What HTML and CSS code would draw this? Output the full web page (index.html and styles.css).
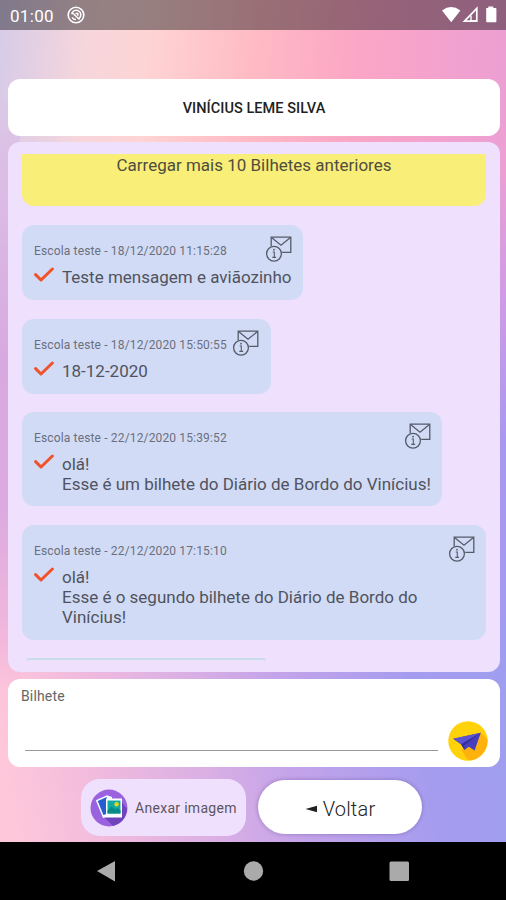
FILE: index.html
```html
<!DOCTYPE html>
<html lang="pt-BR">
<head>
<meta charset="utf-8">
<title>Bilhetes</title>
<link rel="stylesheet" href="styles.css">
</head>
<body>
<svg width="0" height="0" class="defs" aria-hidden="true">
  <symbol id="check" viewBox="0 0 20 16"><path d="M1.6 7.6 7 13 18.4 2" fill="none" stroke="#f0522b" stroke-width="3" stroke-linecap="round" stroke-linejoin="round"/></symbol>
  <symbol id="mail" viewBox="0 0 28 28"><g fill="none" stroke="#555b69" stroke-width="1.3"><path d="M6.2 11V2.2H25.8V17.3H17.2"/><path d="M6.5 2.5 16 10.2 25.5 2.5"/><circle cx="9" cy="18.7" r="7.4"/><path d="M7.7 17h1.6v5.3M7.3 22.4h3.8" stroke-width="1.1"/></g><circle cx="9" cy="14.7" r=".9" fill="#555b69"/></symbol>
</svg>
<div class="phone">
  <header class="status">
    <span class="clock">01:00</span>
    <svg class="dnd" width="18" height="18" viewBox="0 0 18 18" fill="none" stroke="#fff"><circle cx="9" cy="9" r="7.8" stroke-width="1.6"/><path d="M4.7 8.2A4.6 4.6 0 1 1 12 12.5M5.1 11.3A4.6 4.6 0 0 0 9 13.6M5.5 7 12.5 13.5M8.5 7.5h2.3v2.3" stroke-width="1.5"/></svg>
    <svg class="signals" width="56" height="18" viewBox="0 0 56 18"><path d="M0 4.5Q9.2-2.3 18.4 4.5L9.2 16.2Z" fill="#fff"/><path d="M22.5 15.2 34.8 2.4V15.2Z" fill="none" stroke="#fff" stroke-width="1.7"/><path d="M29 9.6V15M29.7 14.6H34" stroke="#fff" stroke-width="1.4"/><path d="M44.2 2.1H46.3V.6H51.3V2.1H53.6Q54.4 2.1 54.4 3V15.2Q54.4 16.2 53.6 16.2H45Q44.2 16.2 44.2 15.2Z" fill="#fff"/></svg>
  </header>
  <main class="screen">
    <h1 class="title">VINÍCIUS LEME SILVA</h1>
    <section class="panel">
      <div class="feed">
        <button class="more">Carregar mais 10 Bilhetes anteriores</button>
        <article class="note n1">
          <div class="meta"><span>Escola teste - 18/12/2020 11:15:28</span><svg class="mail"><use href="#mail"/></svg></div>
          <div class="message"><svg class="check"><use href="#check"/></svg><p>Teste mensagem e aviãozinho</p></div>
        </article>
        <article class="note n2">
          <div class="meta"><span>Escola teste - 18/12/2020 15:50:55</span><svg class="mail"><use href="#mail"/></svg></div>
          <div class="message"><svg class="check"><use href="#check"/></svg><p>18-12-2020</p></div>
        </article>
        <article class="note n3">
          <div class="meta"><span>Escola teste - 22/12/2020 15:39:52</span><svg class="mail"><use href="#mail"/></svg></div>
          <div class="message"><svg class="check"><use href="#check"/></svg><p>olá!<br>Esse é um bilhete do Diário de Bordo do Vinícius!</p></div>
        </article>
        <article class="note n4">
          <div class="meta"><span>Escola teste - 22/12/2020 17:15:10</span><svg class="mail"><use href="#mail"/></svg></div>
          <div class="message"><svg class="check"><use href="#check"/></svg><p>olá!<br>Esse é o segundo bilhete do Diário de Bordo do<br>Vinícius!</p></div>
        </article>
        <div class="next-note"></div>
      </div>
    </section>
    <section class="composer">
      <div class="field"><span class="label">Bilhete</span><div class="line"></div></div>
      <svg class="send" width="40" height="40" viewBox="0 0 40 40"><circle cx="20" cy="20" r="19.7" fill="#ffd20a"/><path d="M32.5 11.5 39.6 18.6Q39.7 31 29 37.3 23 40.3 19.3 38.5L13.5 29Z" fill="#ffb20d"/><path d="M5.2 17.8 32.8 11.8 26.6 29.5 20.7 25.7 16.6 28.9 13 23.3Z" fill="#493fbc"/><path d="M5.2 17.8 32.8 11.8 13 23.3Z" fill="#5c54cf"/><path d="M13 23.3 32.8 11.8 16.2 24.6 16.6 28.9Z" fill="#372da0"/></svg>
    </section>
    <div class="actions">
      <button class="attach"><svg width="38" height="38" viewBox="0 0 38 38"><circle cx="19" cy="19" r="18.5" fill="#9b62df"/><path d="M31 12 37 20Q36 33 23 37L14 28Z" fill="#7043bd"/><path d="M5.8 11.2 17 6.2 22 8 22 27 13 29Z" fill="#f5fbff"/><path d="M7.8 12.1 16.8 8 17 24.8 13.4 26Z" fill="#245fd0"/><path d="M16 9.5h16v19H16z" fill="#fff"/><path d="M17.5 11.5h13v13h-13z" fill="#12aaa5"/><circle cx="26.6" cy="15.3" r="2.2" fill="#e8d51b"/><path d="m17.5 21.5 4-4 4 3 2-1.5 3 2.5v3h-13z" fill="#078b88"/></svg><span>Anexar imagem</span></button>
      <button class="back"><svg width="13" height="8" viewBox="0 0 13 8"><path d="M.5 4 12 .7V7.3Z" fill="#222"/></svg><span>Voltar</span></button>
    </div>
  </main>
  <nav class="nav">
    <svg width="506" height="58" viewBox="0 0 506 58" fill="#aaa"><path d="M97 29 115 19V39.5Z"/><circle cx="253.5" cy="29" r="9.7"/><rect x="389.5" y="19.5" width="19.5" height="19.5" rx="1.5"/></svg>
  </nav>
</div>
</body>
</html>
```

FILE: styles.css
```css
* { box-sizing: border-box; }
body { margin: 0; font-family: Roboto, "Liberation Sans", sans-serif; }
p, h1 { margin: 0; font-weight: 400; }
button { border: 0; padding: 0; margin: 0; font-family: inherit; color: inherit; }
svg { display: block; flex: none; }
.defs { position: absolute; }
.phone {
  width: 506px; height: 900px; display: flex; flex-direction: column; overflow: hidden;
  background:
    linear-gradient(#d9c4e700, #dcc0e6 10%, #d8a9e0 45%, #dcaae0 70%, #f3b8dc 92%, #f8c0dc00) 0 90px / 20px 600px no-repeat,
    linear-gradient(#ee9fd400, #eca0d3 12%, #ca9be7 38%, #aa98ef 58%, #a19cf0 92%, #a19cf000) 486px 90px / 20px 600px no-repeat,
    linear-gradient(94deg, #d6cbe8 0%, #f6d6dc 17%, #fed4d4 29%, #ffbac4 50%, #fba6c6 70%, #ec9fd4 100%) 0 0 / 506px 160px no-repeat,
    linear-gradient(80deg, #ffc8da 2%, #f0bade 18%, #dbb0e4 34%, #c5a4e9 48%, #a69cef 70%, #98a1f0 100%) 0 160px / 506px 682px no-repeat;
}
.status { height: 30px; display: flex; align-items: center; padding: 0 8px 0 10px; background: rgba(0,0,0,.4); color: #fff; }
.clock { font-size: 17px; letter-spacing: .3px; padding-top: 2px; }
.dnd { margin-left: 13px; }
.signals { margin-left: auto; }
.screen { height: 812px; padding: 49px 6px 0 8px; }
.title { height: 57px; border-radius: 12px; background: #fff; display: flex; align-items: center; justify-content: center; font-size: 14.5px; font-weight: 500; letter-spacing: .05px; color: #222; padding-top: 2px; }
.panel { height: 530px; margin-top: 6px; padding: 12px 14px 11px; border-radius: 12px; background: #efe0fe; }
.feed { height: 507px; overflow: hidden; display: flex; flex-direction: column; align-items: flex-start; }
.more { flex: none; width: 100%; height: 52px; background: #f8ee78; border-radius: 0 0 12px 12px; padding-bottom: 30px; font-size: 17px; color: #504d3e; }
.note { flex: none; height: 75px; margin-top: 19px; padding: 12px; border-radius: 12px; background: #d1dbf5; color: #50535e; }
.n1 { width: 281px; }
.n2 { width: 249px; margin-top: 18.5px; }
.n3 { width: 420px; height: 94px; margin-top: 18.5px; }
.n4 { width: 464px; height: 115px; margin-top: 19px; }
.meta { height: 28px; display: flex; justify-content: space-between; font-size: 12px; line-height: 29px; letter-spacing: .15px; color: #6b6f7d; white-space: nowrap; }
.mail { width: 28px; height: 28px; margin-top: -2px; margin-right: -2px; }
.n2 .mail { margin-right: -1px; }
.message { display: flex; gap: 8px; font-size: 17px; line-height: 20px; white-space: nowrap; padding-top: 2px; }
.check { width: 20px; height: 16px; }
.next-note { flex: none; width: 240px; height: 3px; margin: 18px 0 0 4px; border-top: 2px solid #cadbeb; border-radius: 8px 8px 0 0; }
.composer { height: 88px; margin-top: 7px; padding: 8px 12px 6px 13px; border-radius: 12px; background: #fff; display: flex; justify-content: space-between; align-items: flex-end; }
.field { width: 417px; align-self: stretch; }
.label { display: block; font-size: 14px; line-height: 18px; letter-spacing: .15px; color: #666; }
.line { height: 1.5px; margin: 44.5px 0 0 4px; background: #999; }
.actions { display: flex; gap: 12px; margin: 12px 0 0 73px; align-items: flex-start; }
.attach { width: 165px; height: 57px; border-radius: 19px; background: #efe0fe; display: flex; align-items: center; gap: 7px; padding-left: 9px; font-size: 14px; letter-spacing: .3px; color: #5c5661; white-space: nowrap; }
.back { width: 164px; height: 54px; margin-top: 1px; border-radius: 27px; background: #fff; box-shadow: 0 0 4px #56438877; display: flex; align-items: center; justify-content: center; gap: 5px; font-size: 20px; font-weight: 300; letter-spacing: .2px; color: #222; }
.back span { padding-top: 3px; }
.back svg { margin-top: 3px; }
.nav { height: 58px; background: #000; }
```
